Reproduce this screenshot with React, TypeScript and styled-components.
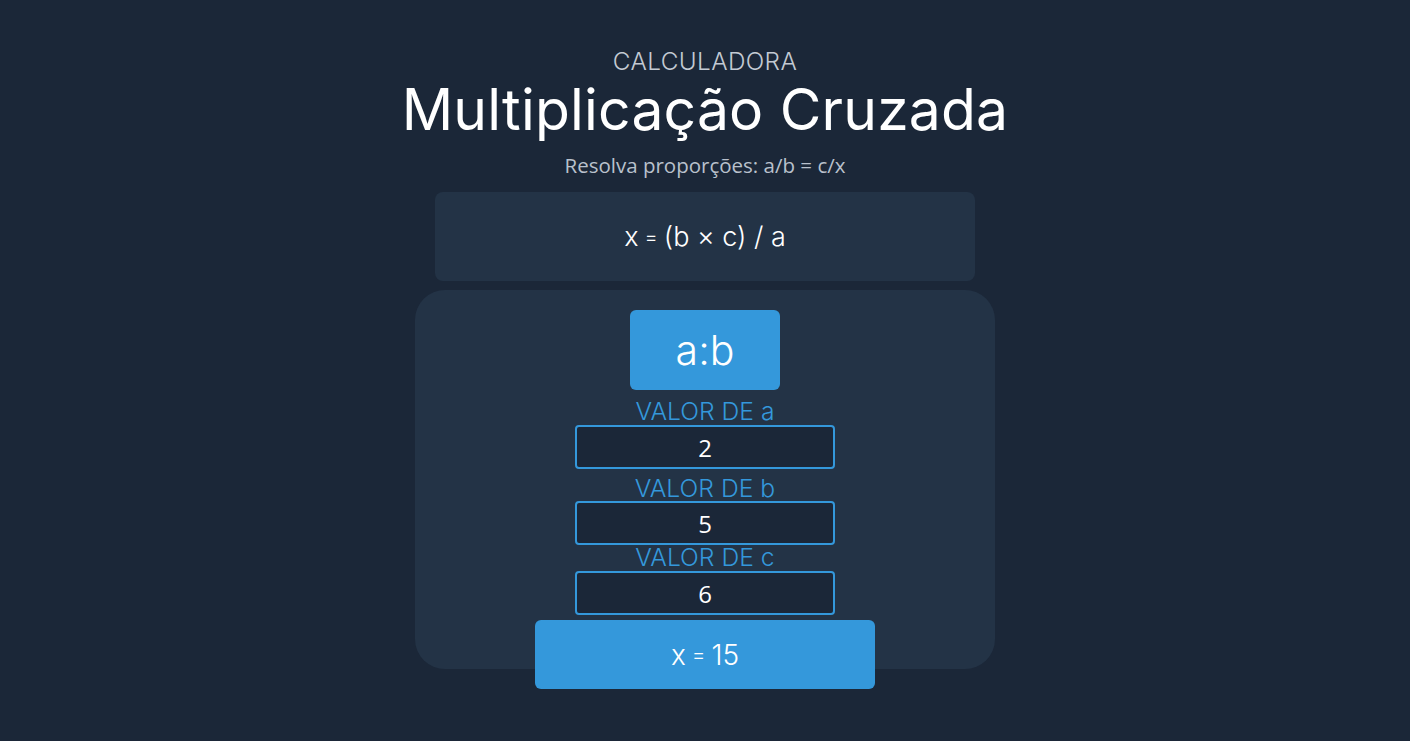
import React, { useState } from 'react';
import styled, { createGlobalStyle } from 'styled-components';

const GlobalStyle = createGlobalStyle`
  html, body {
    margin: 0;
    padding: 0;
    background: #1b2738;
  }
`;

const Page = styled.div`
  min-height: 741px;
  display: flex;
  flex-direction: column;
  align-items: center;
  padding-top: 48px;
  box-sizing: border-box;
  font-family: Inter, 'Liberation Sans', sans-serif;
  color: #fff;
`;

const Eyebrow = styled.div`
  font-size: 24.3px;
  line-height: 26px;
  font-weight: 300;
  color: #c3cad3;
  letter-spacing: 0.4px;
`;

const Title = styled.h1`
  margin: 2px 0 0;
  font-size: 57px;
  line-height: 68px;
  font-weight: 400;
  color: #fff;
  letter-spacing: 0.2px;
`;

const Subtitle = styled.p`
  margin: 9px 0 0;
  font-family: 'Open Sans', 'Noto Sans', sans-serif;
  font-size: 20.5px;
  line-height: 24px;
  color: #b9c1cc;
`;

const FormulaBox = styled.div`
  margin-top: 15px;
  width: 540px;
  height: 89px;
  border-radius: 8px;
  background: #233346;
  display: flex;
  align-items: center;
  justify-content: center;
  font-size: 27px;
  font-weight: 300;
`;

const Card = styled.div`
  margin-top: 9px;
  width: 580px;
  height: 379px;
  border-radius: 30px;
  background: #233346;
  padding-top: 20px;
  box-sizing: border-box;
  display: flex;
  flex-direction: column;
  align-items: center;

  & > * {
    flex-shrink: 0;
  }
`;

const RatioButton = styled.button`
  width: 150px;
  height: 80px;
  border: none;
  border-radius: 6px;
  background: #3498db;
  color: #fff;
  font-family: Inter, 'Liberation Sans', sans-serif;
  font-size: 41px;
  font-weight: 300;
  cursor: pointer;
`;

const Label = styled.label<{ $top: number }>`
  margin-top: ${(p) => p.$top}px;
  font-size: 24.7px;
  line-height: 24px;
  font-weight: 300;
  color: #3498db;
`;

const Field = styled.input<{ $top: number }>`
  margin-top: ${(p) => p.$top}px;
  width: 260px;
  height: 44px;
  box-sizing: border-box;
  border: 2px solid #3498db;
  border-radius: 4px;
  background: #1b2738;
  color: #fff;
  text-align: center;
  font-family: 'Open Sans', 'Noto Sans', sans-serif;
  font-size: 24px;
  outline: none;
`;

const Result = styled.div`
  margin-top: 5px;
  width: 340px;
  height: 69px;
  border-radius: 6px;
  background: #3498db;
  display: flex;
  align-items: center;
  justify-content: center;
  font-size: 28px;
  font-weight: 300;
`;

const Eq = styled.span`
  font-size: 0.75em;
  margin: 0 6px;
`;

const App: React.FC = () => {
  const [a, setA] = useState('2');
  const [b, setB] = useState('5');
  const [c, setC] = useState('6');

  const x = (Number(b) * Number(c)) / Number(a);
  const result = Number.isFinite(x) ? String(Math.round(x * 100) / 100) : '—';

  return (
    <>
      <GlobalStyle />
      <Page>
        <Eyebrow>CALCULADORA</Eyebrow>
        <Title>Multiplicação Cruzada</Title>
        <Subtitle>Resolva proporções: a/b = c/x</Subtitle>

        <FormulaBox>
          x<Eq>=</Eq>(b × c) / a
        </FormulaBox>

        <Card>
          <RatioButton>a:b</RatioButton>

          <Label $top={9}>VALOR DE a</Label>
          <Field $top={2} value={a} onChange={(e) => setA(e.target.value)} />

          <Label $top={7}>VALOR DE b</Label>
          <Field $top={1} value={b} onChange={(e) => setB(e.target.value)} />

          <Label $top={0}>VALOR DE c</Label>
          <Field $top={2} value={c} onChange={(e) => setC(e.target.value)} />

          <Result>
            x<Eq>=</Eq>{result}
          </Result>
        </Card>
      </Page>
    </>
  );
};

export default App;
